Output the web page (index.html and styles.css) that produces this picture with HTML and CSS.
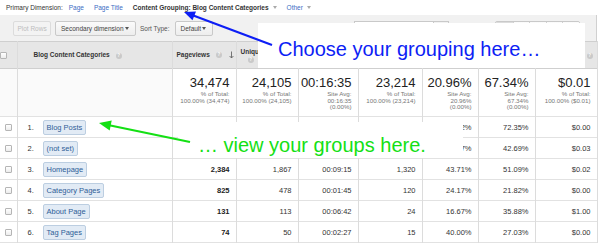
FILE: index.html
```html
<!DOCTYPE html>
<html>
<head>
<meta charset="utf-8">
<link rel="stylesheet" href="styles.css">
</head>
<body>
<div class="page">
  <div class="topbar">
    <span class="pd-label">Primary Dimension:</span>
    <a class="pd-link first">Page</a>
    <a class="pd-link">Page Title</a>
    <span class="pd-current">Content Grouping: Blog Content Categories</span><span class="caret light"></span>
    <a class="pd-link other">Other</a><span class="caret light"></span>
  </div>
  <div class="toolbar">
    <span class="btn disabled">Plot Rows</span>
    <span class="btn sec">Secondary dimension <span class="caret"></span></span>
    <span class="sort-label">Sort Type:</span>
    <span class="btn def">Default <span class="caret"></span></span>
    <span class="search"><span class="search-btn"></span></span>
    <span class="views"><span class="v on"></span><span class="v"></span><span class="v"></span><span class="v"></span><span class="v"></span></span>
  </div>
  <table class="grid">
    <colgroup>
      <col class="w-chk"><col class="w-dim"><col class="w-pv"><col class="w-upv"><col class="w-time"><col class="w-ent"><col class="w-br"><col class="w-exit"><col class="w-val">
    </colgroup>
    <thead>
      <tr class="head">
        <th class="chk"><span class="box"></span></th>
        <th class="dim"><span class="htext">Blog Content Categories</span><span class="q">?</span></th>
        <th class="num-h"><span class="htext">Pageviews</span><span class="q">?</span><svg class="sort" width="5" height="8" viewBox="0 0 5 8"><path d="M2.5 0.5V7M0.6 5l1.9 2 1.9-2" fill="none" stroke="#666" stroke-width="0.9"/></svg></th>
        <th class="num-h wrap"><span class="htext clip">Uniqu</span><span class="q block">?</span></th>
        <th class="num-h"></th>
        <th class="num-h"></th>
        <th class="num-h"></th>
        <th class="num-h"></th>
        <th class="num-h right"><span class="q">?</span></th>
      </tr>
    </thead>
    <tbody>
      <tr class="totals">
        <td class="chk"></td>
        <td class="dim"></td>
        <td class="tot"><div class="big">34,474</div><div class="sub">% of Total:<br>100.00% (34,474)</div></td>
        <td class="tot"><div class="big">24,105</div><div class="sub">% of Total:<br>100.00% (24,105)</div></td>
        <td class="tot"><div class="big">00:16:35</div><div class="sub">Site Avg:<br>00:16:35<br>(0.00%)</div></td>
        <td class="tot"><div class="big">23,214</div><div class="sub">% of Total:<br>100.00% (23,214)</div></td>
        <td class="tot"><div class="big">20.96%</div><div class="sub">Site Avg:<br>20.96%<br>(0.00%)</div></td>
        <td class="tot"><div class="big">67.34%</div><div class="sub">Site Avg:<br>67.34%<br>(0.00%)</div></td>
        <td class="tot"><div class="big">$0.01</div><div class="sub">% of Total:<br>100.00% ($0.01)</div></td>
      </tr>
      <tr class="row">
        <td class="chk"><span class="box"></span></td>
        <td class="dim"><span class="idx">1.</span><span class="tag">Blog Posts</span></td>
        <td class="n b"></td><td class="n"></td><td class="n"></td><td class="n"></td><td class="n">16.62%</td><td class="n">72.35%</td><td class="n">$0.00</td>
      </tr>
      <tr class="row">
        <td class="chk"><span class="box"></span></td>
        <td class="dim"><span class="idx">2.</span><span class="tag">(not set)</span></td>
        <td class="n b"></td><td class="n"></td><td class="n"></td><td class="n"></td><td class="n">27.47%</td><td class="n">42.69%</td><td class="n">$0.03</td>
      </tr>
      <tr class="row">
        <td class="chk"><span class="box"></span></td>
        <td class="dim"><span class="idx">3.</span><span class="tag">Homepage</span></td>
        <td class="n b">2,384</td><td class="n">1,867</td><td class="n">00:09:15</td><td class="n">1,320</td><td class="n">43.71%</td><td class="n">51.09%</td><td class="n">$0.02</td>
      </tr>
      <tr class="row">
        <td class="chk"><span class="box"></span></td>
        <td class="dim"><span class="idx">4.</span><span class="tag">Category Pages</span></td>
        <td class="n b">825</td><td class="n">478</td><td class="n">00:01:45</td><td class="n">120</td><td class="n">24.17%</td><td class="n">21.82%</td><td class="n">$0.00</td>
      </tr>
      <tr class="row">
        <td class="chk"><span class="box"></span></td>
        <td class="dim"><span class="idx">5.</span><span class="tag">About Page</span></td>
        <td class="n b">131</td><td class="n">113</td><td class="n">00:06:42</td><td class="n">24</td><td class="n">16.67%</td><td class="n">35.88%</td><td class="n">$1.00</td>
      </tr>
      <tr class="row">
        <td class="chk"><span class="box"></span></td>
        <td class="dim"><span class="idx">6.</span><span class="tag">Tag Pages</span></td>
        <td class="n b">74</td><td class="n">50</td><td class="n">00:02:27</td><td class="n">15</td><td class="n">40.00%</td><td class="n">27.03%</td><td class="n">$0.00</td>
      </tr>
    </tbody>
  </table>
</div>
<div class="callout callout-blue">Choose your grouping here…</div>
<div class="callout callout-green">… view your groups here.</div>
<svg class="arrows" width="600" height="244" viewBox="0 0 600 244">
  <line x1="272" y1="45" x2="192" y2="15" stroke="#0d1ef5" stroke-width="2.2"/>
  <polygon points="184,12 196,11.5 192.5,20.3" fill="#0d1ef5"/>
  <line x1="190" y1="142" x2="108" y2="125" stroke="#14e014" stroke-width="2.2"/>
  <polygon points="99,123 111.7,120.4 109.7,130.5" fill="#14e014"/>
</svg>
</body>
</html>
```

FILE: styles.css
```css
* { box-sizing: border-box; }
html, body { margin: 0; padding: 0; background: #fff; }
body {
  font-family: "Liberation Sans", Arial, sans-serif;
  color: #333;
  width: 600px;
  height: 244px;
  overflow: hidden;
  position: relative;
}
.page {
  width: 597px;
}
.topbar {
  height: 15px;
  display: flex;
  align-items: center;
  padding-left: 6px;
  font-size: 6.5px;
  white-space: nowrap;
}
.pd-label { color: #333; }
.pd-link { color: #3b6cc4; margin-left: 10px; }
.pd-link.first { margin-left: 6px; }
.pd-link.other { margin-left: 10px; }
.pd-current { color: #333; font-weight: bold; margin-left: 10px; }
.caret {
  display: inline-block;
  width: 0; height: 0;
  border-left: 2.5px solid transparent;
  border-right: 2.5px solid transparent;
  border-top: 3px solid #555;
  margin-left: 4px;
  vertical-align: middle;
}
.caret.light { border-top-color: #aaa; }
.toolbar {
  height: 26px;
  background: #f1f1f1;
  border-right: 1px solid #d0d0d0;
  display: flex;
  align-items: center;
  padding-left: 13px;
  font-size: 6.5px;
  white-space: nowrap;
}
.btn {
  height: 15px;
  display: inline-flex;
  align-items: center;
  padding: 0 6px;
  border: 1px solid #c9c9c9;
  border-radius: 2px;
  background: linear-gradient(#fbfbfb, #ededed);
  color: #444;
}
.btn.disabled {
  color: #bdbdbd;
  border-color: #dcdcdc;
  background: #f3f3f3;
  width: 38px;
  justify-content: center;
}
.btn.sec { margin-left: 4px; width: 81px; padding-left: 5px; }
.btn.sec .caret { margin-left: auto; }
.btn.def { margin-left: 5px; width: 38px; padding-left: 5px; }
.btn.def .caret { margin-left: auto; }
.sort-label { margin-left: 4px; color: #555; }
.search {
  margin-left: auto;
  width: 95px;
  height: 15px;
  border: 1px solid #c9c9c9;
  background: #fff;
  display: flex;
  justify-content: flex-end;
}
.search-btn { width: 15px; border-left: 1px solid #c9c9c9; background: #f2f2f2; }
.views {
  margin-left: 46px;
  margin-right: 16px;
  display: flex;
  height: 15px;
  border: 1px solid #c9c9c9;
  border-radius: 2px;
  overflow: hidden;
}
.v { width: 16.6px; background: linear-gradient(#fbfbfb, #ededed); border-left: 1px solid #d0d0d0; }
.v:first-child { border-left: none; }
.v.on { background: #dcdcdc; }

.grid {
  width: 597px;
  border-collapse: collapse;
  table-layout: fixed;
  font-size: 7.5px;
}
.w-chk { width: 17px; }
.w-dim { width: 155px; }
.w-pv { width: 64px; }
.w-upv { width: 62px; }
.w-time { width: 60px; }
.w-ent { width: 64px; }
.w-br { width: 56px; }
.w-exit { width: 57px; }
.w-val { width: 62px; }
.grid th, .grid td {
  border-left: 1px solid #dcdcdc;
  border-right: 1px solid #dcdcdc;
  padding: 0;
}
.grid td:first-child, .grid th:first-child { border-left: none; }
.head { height: 27px; background: #e6e6e6; border-top: 1px solid #cfcfcf; }
.head th {
  font-size: 6.5px;
  font-weight: bold;
  color: #333;
  text-align: left;
  vertical-align: middle;
  white-space: nowrap;
}
.head th.dim { padding-left: 16px; }
.head th.num-h { padding-left: 4px; }
.head th.right { text-align: right; padding-right: 4px; }
.head th.wrap { vertical-align: top; padding-top: 5px; line-height: 9px; }
.q {
  display: inline-block;
  width: 6px; height: 6px;
  border-radius: 50%;
  background: #c9c9c9;
  color: #fff;
  font-size: 4.5px;
  line-height: 6px;
  text-align: center;
  margin-left: 6px;
  vertical-align: middle;
}
.q.block { display: block; margin: 1px 0 0 7px; }
.sort { margin-left: 7px; vertical-align: middle; }
.chk { text-align: center; }
.box {
  display: inline-block;
  width: 7px; height: 7px;
  border: 1px solid #b5b5b5;
  border-radius: 1px;
  background: linear-gradient(#fff, #ececec);
  vertical-align: middle;
}
.totals { height: 48px; background: #fff; border-bottom: 1px solid #e2e2e2; border-top: 1px solid #cfcfcf; }
.totals td.dim, .totals td.chk { background: #fafafa; }
.tot { text-align: right; padding-right: 6px !important; vertical-align: top; padding-top: 7px !important; }
.big { font-size: 13px; line-height: 14px; color: #222; }
.sub { font-size: 6.2px; line-height: 6.6px; color: #777; margin-top: 1px; }
.row { height: 21px; border-bottom: 1px solid #e2e2e2; }
.row td { vertical-align: middle; }
.n { text-align: right; padding-right: 6px !important; color: #333; }
.n.b { font-weight: bold; color: #222; }
.dim .idx { display: inline-block; width: 15px; margin-left: 10px; color: #333; }
.tag {
  display: inline-block;
  padding: 1px 3px;
  line-height: 11px;
  background: #e2ebf5;
  border: 1px solid #bccee1;
  border-radius: 2px;
  color: #2e5d97;
}

.callout {
  position: absolute;
  background: #fff;
  font-size: 20px;
  white-space: nowrap;
}
.callout-blue {
  left: 258px; top: 23px;
  width: 327px; height: 45px;
  color: #0d1ef5;
  padding: 16px 0 0 20px;
  line-height: 20px;
}
.callout-green {
  left: 178px; top: 122px;
  width: 285px; height: 36px;
  color: #14e014;
  padding: 13px 0 0 20px;
  line-height: 20px;
}
.arrows {
  position: absolute;
  left: 0; top: 0;
  pointer-events: none;
}
```
